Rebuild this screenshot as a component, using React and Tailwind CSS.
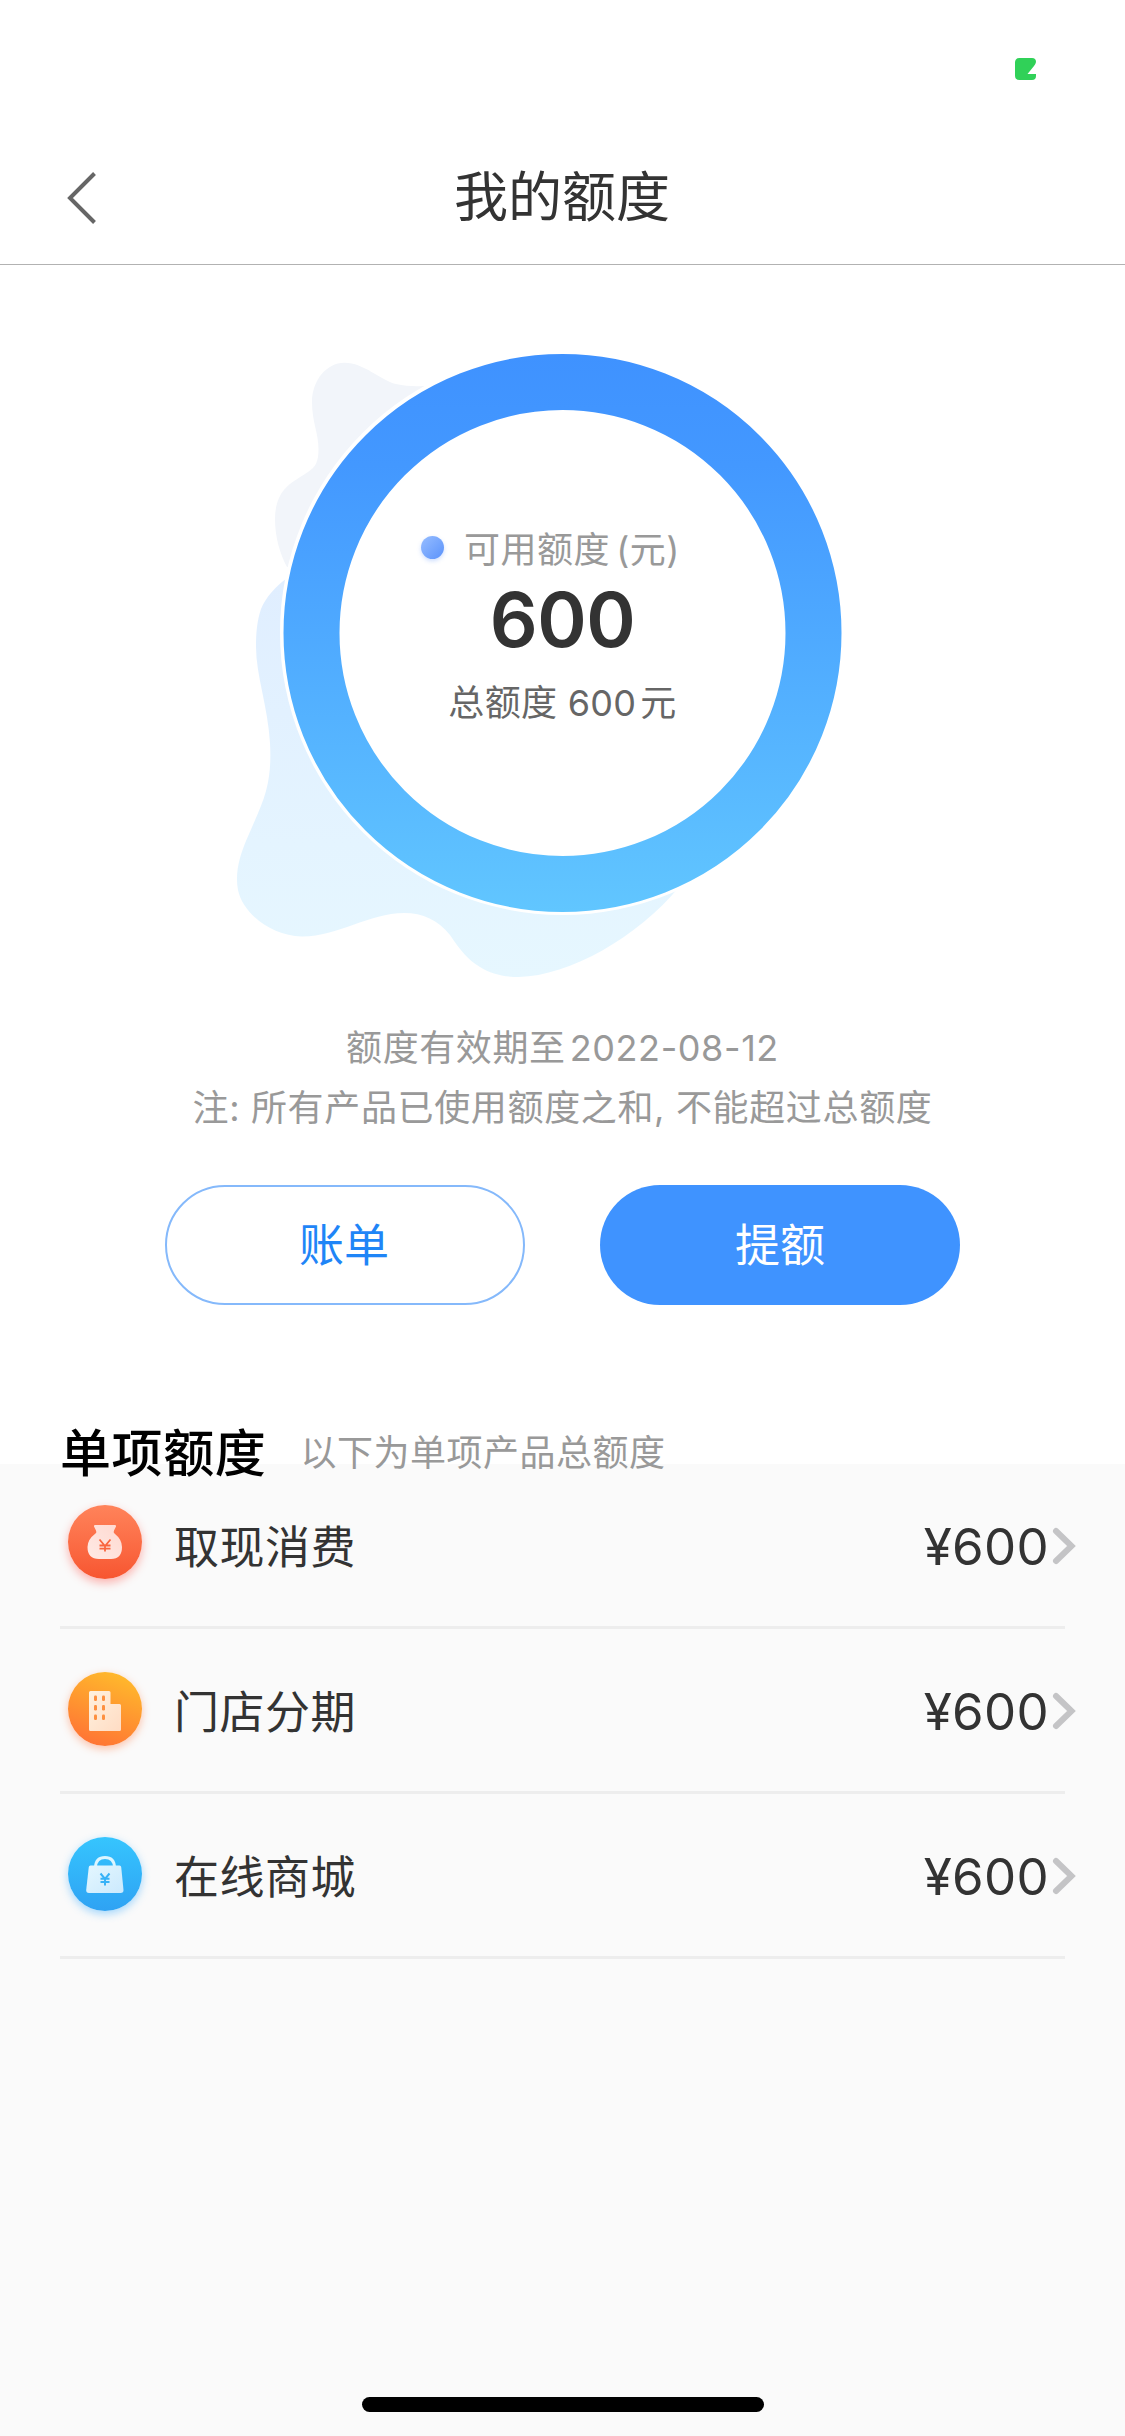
const cjk = "font-['Inter','Noto_Sans_CJK_SC',sans-serif]";

function StatusBar() {
  return (
    <div className="flex h-[132px] shrink-0 justify-end pr-[89px] pt-[58px]">
      <svg width="21" height="22" viewBox="0 0 21 22" className="block">
        <path d="M4.500 0H17Q21 0 21 4Q20.500 6.500 19 8L12.500 16H21V18Q21 22 17 22H4.500Q0 22 0 17.500V4.500Q0 0 4.500 0Z" fill="#30d158" />
      </svg>
    </div>
  );
}

function Header() {
  return (
    <header className="grid h-[133px] shrink-0 grid-cols-[1fr_auto_1fr] items-center border-b border-[#b2b2b2]">
      <svg width="32" height="54" viewBox="0 0 32 54" className="ml-[66px] block">
        <path d="M28.500 2.500L4 27L28.500 51.500" fill="none" stroke="#666" strokeWidth="4" />
      </svg>
      <h1 className="pr-px text-[54px] leading-none text-[#333]">我的额度</h1>
    </header>
  );
}

function QuotaRing() {
  return (
    <section className="relative mt-[65px] h-[670px] shrink-0">
      <svg width="1125" height="670" viewBox="0 330 1125 670" className="absolute left-0 top-0">
        <defs>
          <linearGradient id="ring" gradientUnits="userSpaceOnUse" x1="0" y1="354" x2="0" y2="912">
            <stop offset="0" stopColor="#3f92ff" />
            <stop offset="0.200" stopColor="#4398ff" />
            <stop offset="1" stopColor="#61c6ff" />
          </linearGradient>
          <linearGradient id="blob" gradientUnits="userSpaceOnUse" x1="0" y1="580" x2="0" y2="977">
            <stop offset="0" stopColor="#e0eeff" />
            <stop offset="1" stopColor="#e6f7ff" />
          </linearGradient>
        </defs>
        <path
          d="M432 386C418 386 408 387 396 384C380 380 364 362.700 344.500 362.700C326 362.700 312 381 312 402C312 422 318.500 433 318.500 449C318.500 461 316 467 308 472C298 479 288 483 281 494C277 501 275 509 275 519C275 537 280 554 287 567L380 560Z"
          fill="#f2f5fa"
        />
        <path
          d="M286 579C276 586 266 597 261 609C257 621 256 633 256 647C256 675 268 707 270 743C271 762 270 776 266 791C260 813 245 839 240 858C237 869 236 880 238 890C243 914 272 936 301.600 936.500C337 937 369 913 404 913C423 913 438 920 450 935C461 951 467 959 480 967C491 974 504 977 519 977C569 976 638 937 679 887L560 640Z"
          fill="url(#blob)"
        />
        <circle cx="562.500" cy="632.500" r="282.500" fill="#fff" />
        <circle cx="562.500" cy="633" r="251" fill="#fff" stroke="url(#ring)" strokeWidth="56" />
      </svg>
      <div className="relative flex flex-col items-center pt-[198px]">
        <div className="flex h-[44px] items-center pr-[24px]">
          <span className="-mt-[6px] mr-[20px] size-[23px] rounded-full bg-gradient-to-br from-[#97bdff] to-[#5a92fb] shadow-[0_2px_4px_rgba(90,146,251,0.3)]" />
          <span className="text-[36px] leading-[44px] tracking-[0.5px] text-[#999]">可用额度<span className="ml-[6px]">(元)</span></span>
        </div>
        <div className="mt-[12px] text-[75px] font-semibold leading-[72px] tracking-[-0.5px] text-[#333]">600</div>
        <div className="mt-[25px] text-[36px] leading-[44px] tracking-[0.3px] text-[#666]">总额度 600<span className="ml-[4px]">元</span></div>
      </div>
    </section>
  );
}

function Money() {
  return (
    <svg width="74" height="74" viewBox="0 0 74 74" className="block">
      <defs>
        <linearGradient id="moneyGlyph" x1="0" y1="1" x2="1" y2="0"><stop offset="0" stopColor="#ffeae5" /><stop offset="1" stopColor="#ffd9d0" /></linearGradient>
      </defs>
      <path d="M27 20H47Q48.500 20 48 21.500L46 25.500Q45 27.500 46.500 28.500Q54 34.500 54 42Q54 54 43 54H31Q19.500 54 19.500 42Q19.500 34.500 27.500 28.500Q29 27.500 28 25.500L26 21.500Q25.500 20 27 20Z" fill="url(#moneyGlyph)" />
      <path d="M31.500 34.500L37 41L42.500 34.500M37 41V46.500M31.500 40.500H42.500M31.500 43.700H42.500" fill="none" stroke="#f9663f" strokeWidth="1.800" />
    </svg>
  );
}

function Building() {
  return (
    <svg width="74" height="74" viewBox="0 0 74 74" className="block">
      <defs>
        <linearGradient id="buildGlyph" x1="0" y1="0" x2="1" y2="1"><stop offset="0" stopColor="#fff1de" /><stop offset="1" stopColor="#ffdcc4" /></linearGradient>
      </defs>
      <path d="M22.500 19H41Q42.500 19 42.500 20.500V32H51.500Q53 32 53 33.500V57.500Q53 59 51.500 59H22.500Q21 59 21 57.500V20.500Q21 19 22.500 19Z" fill="url(#buildGlyph)" />
      <g fill="#fd9040">
        <rect x="26" y="23.500" width="3" height="5.500" rx="1.200" /><rect x="34" y="23.500" width="3" height="5.500" rx="1.200" />
        <rect x="26" y="33" width="3" height="5.500" rx="1.200" /><rect x="34" y="33" width="3" height="5.500" rx="1.200" />
        <rect x="26" y="42.500" width="3" height="5.500" rx="1.200" /><rect x="34" y="42.500" width="3" height="5.500" rx="1.200" />
      </g>
    </svg>
  );
}

function Bag() {
  return (
    <svg width="74" height="74" viewBox="0 0 74 74" className="block">
      <defs>
        <linearGradient id="bagGlyph" x1="0" y1="0" x2="1" y2="1"><stop offset="0" stopColor="#e4f7ff" /><stop offset="1" stopColor="#cbe9fd" /></linearGradient>
      </defs>
      <path d="M27.500 30Q28 20.500 37 20.500Q46 20.500 46.500 30" fill="none" stroke="#dcf5ff" strokeWidth="3" />
      <path d="M22.500 28.500H51.500Q53 28.500 53.200 30L55.500 53Q55.700 56 52.500 56H21Q18 56 18.200 53L20.800 30Q21 28.500 22.500 28.500Z" fill="url(#bagGlyph)" />
      <path d="M32.500 36.500L37 42L41.500 36.500M37 42V48.500M32.500 41.800H41.500M32.500 45H41.500" fill="none" stroke="#37b2f7" strokeWidth="2" />
    </svg>
  );
}

const items = [
  { name: "取现消费", Icon: Money, tone: "-mt-[6px] bg-gradient-to-t from-[#f75530] to-[#ff835a] shadow-[0_4px_10px_rgba(255,70,60,0.4)]" },
  { name: "门店分期", Icon: Building, tone: "-mt-[2px] bg-[linear-gradient(20deg,#ff6c35,#ffc12b)] shadow-[0_3px_9px_rgba(255,110,50,0.4)]" },
  { name: "在线商城", Icon: Bag, tone: "-mt-[2px] bg-gradient-to-t from-[#2fa2f3] to-[#36c5fe] shadow-[0_3px_9px_rgba(55,170,255,0.45)]" },
];

function QuotaRow({ name, Icon, tone }) {
  return (
    <li className="mx-[60px] flex h-[165px] items-center border-b-[3px] border-[#ededed] pl-[8px]">
      <div className={"size-[74px] shrink-0 rounded-full " + tone}><Icon /></div>
      <span className="ml-[32px] mt-[6px] text-[45px] leading-[60px] tracking-[0.5px] text-[#333]">{name}</span>
      <span className="ml-auto mt-[4px] text-[51px] leading-[60px] tracking-[0.3px] text-[#333]">¥600</span>
      <svg width="26" height="42" viewBox="-1 -2 26 42" className="-mr-[12px] ml-[2px] mt-[2px] block">
        <path d="M4 4L19.500 19L4 34" fill="none" stroke="#c4c4c6" strokeWidth="6" strokeLinecap="round" />
      </svg>
    </li>
  );
}

export default function App() {
  return (
    <div className={"flex h-[2436px] w-[1125px] flex-col overflow-hidden bg-[#fafafa] " + cjk}>
      <div className="flex h-[1464px] shrink-0 flex-col bg-white">
        <StatusBar />
        <Header />
        <QuotaRing />
        <div className="mt-[18px] shrink-0 text-center text-[36px] leading-[60px] text-[#999]">
          <p className="tracking-[0.6px]">额度有效期至<span className="ml-[4px]">2022-08-12</span></p>
          <p className="tracking-[0.65px]">注: 所有产品已使用额度之和, 不能超过总额度</p>
        </div>
        <div className="mt-[47px] flex shrink-0 justify-center gap-[75px]">
          <button className="h-[120px] w-[360px] rounded-full border-2 border-[#85b9fb] pr-[2px] text-[45px] leading-none text-[#1f85f7]">账单</button>
          <button className="h-[120px] w-[360px] rounded-full bg-[#3f93ff] text-[45px] leading-none text-white">提额</button>
        </div>
        <div className="mt-[117px] flex h-[64px] shrink-0 items-center pl-[60px]">
          <h2 className="text-[51px] font-medium leading-[64px] tracking-[0.6px] text-black">单项额度</h2>
          <span className="-mt-[2px] ml-[34px] text-[36px] leading-[64px] tracking-[0.5px] text-[#999]">以下为单项产品总额度</span>
        </div>
      </div>
      <ul>
        {items.map((item) => (
          <QuotaRow key={item.name} {...item} />
        ))}
      </ul>
      <div className="mx-auto mb-[24px] mt-auto h-[15px] w-[402px] rounded-full bg-black" />
    </div>
  );
}
